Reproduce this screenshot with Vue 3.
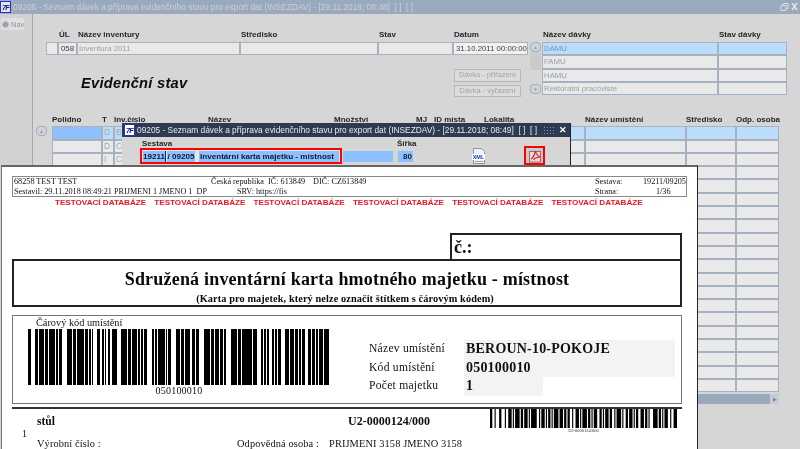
<script setup>
const topRows = ['DAMU', 'FAMU', 'HAMU', 'Rektoratni pracoviste']
const colWidths = [50, 12, 94, 126, 82, 18, 50, 101, 101, 50, 43]
const headers = ['Polidno', 'T', 'Inv.číslo', 'Název', 'Množství', 'MJ', 'ID místa', 'Lokalita', 'Název umístění', 'Středisko', 'Odp. osoba']
const gridCols = colWidths.map(w => w + 'px').join(' ')
const rows = Array.from({ length: 20 }, (_, i) => i)
const cellText = (r, c) => (c === 1 ? ['D', 'D', 'I'][r] || '' : c === 2 ? ['B', 'C', 'C'][r] || '' : '')
const testItems = Array.from({ length: 6 }, () => 'TESTOVACÍ DATABÁZE')

function toRects(start, seq) {
  const out = []
  let x = start
  seq.forEach((w, i) => {
    if (i % 2 === 0) out.push({ x, w })
    x += w
  })
  return out
}
const bigBars = [
  [28, [3]],
  [35, [3, 1, 5, 1, 3, 1, 6, 1, 2, 1, 3]],
  [67, [5, 1, 3, 1, 7, 1, 3, 1, 2, 1, 1]],
  [97, [3, 2, 2, 1, 1, 2, 2, 2, 5]],
  [121, [6, 1, 3, 1, 5, 1, 2, 1, 2, 1, 3]],
  [152, [2, 1, 2, 1, 7, 1, 1, 1, 3, 1]],
  [176, [4, 1, 3, 1, 5, 2, 3, 1, 3]],
  [204, [6, 1, 3, 1, 4, 1, 3, 1, 2]],
  [231, [6, 1, 3, 1, 10, 1, 4]],
  [261, [2, 1, 2, 1, 2, 3, 2, 1, 2, 1, 3]],
  [285, [4, 1, 4, 1, 3, 1, 2, 1, 3]],
  [308, [3, 1, 3, 1, 2, 1, 4, 1, 5]]
].flatMap(([s, seq]) => toRects(s, seq))

const smallSeq = [2, 2, 1, 3, 2, 3, 1, 2, 3, 1, 1, 1, 4, 1, 2, 1, 3, 1, 1, 1, 5, 2, 1, 1, 3, 1, 1, 1, 2, 1, 1, 1, 4, 1, 3, 1, 2, 1, 2, 2, 1, 2, 3, 1, 1, 1, 4, 1, 2, 1, 1, 1, 3, 2, 2, 1, 1, 1, 3, 1, 2, 2, 1, 1, 4, 1, 1, 2, 2, 1, 3, 1, 1, 1, 2, 2, 3, 1, 2, 1, 1, 3, 4, 1, 2, 1, 1, 1, 3, 2, 1, 2, 3]
const smallTotal = smallSeq.reduce((a, b) => a + b, 0)
const smallBars = toRects(0, smallSeq)
</script>

<template>
  <div class="screen">
    <!-- background window -->
    <div class="win">
      <header class="titlebar">
        <span class="logo logo-dim"><i>7F</i></span>
        <span class="title-text">09205 - Seznam dávek a příprava evidenčního stavu pro export dat (INSEZDAV) - [29.11.2018; 08:48]&nbsp;&nbsp;[ ]&nbsp;&nbsp;[ ]</span>
        <span class="win-ctrl">
          <svg width="18" height="10" viewBox="0 0 18 10"><path d="M1 3.5h5v5H1zM3 3.5V1.5h5v5H6" fill="none" stroke="#d8dde4" stroke-width="1"/><path d="M12 1l5 7M17 1l-5 7" stroke="#e4e8ee" stroke-width="1.4"/></svg>
        </span>
      </header>
      <div class="win-body">
        <aside class="side">
          <div class="nav"><span class="nav-dot"></span>Nav</div>
        </aside>
        <main class="content">
          <section class="top">
            <div class="inv">
              <div class="inv-grid">
                <span></span><b>ÚL</b><b>Název inventury</b><b>Středisko</b><b>Stav</b><b>Datum</b>
                <span class="f"></span>
                <span class="f dark">058</span>
                <span class="f">Inventura 2011</span>
                <span class="f"></span>
                <span class="f"></span>
                <span class="f dark white">31.10.2011 00:00:00</span>
              </div>
              <div class="inv-lower">
                <h1>Evidenční stav</h1>
                <div class="btns">
                  <span class="btn">Dávka - přiřazení</span>
                  <span class="btn">Dávka - vyřazení</span>
                </div>
              </div>
            </div>
            <div class="vscroll">
              <span class="arrow">▲</span>
              <span class="track"></span>
              <span class="arrow">▼</span>
            </div>
            <div class="batch">
              <b>Název dávky</b><b>Stav dávky</b>
              <template v-for="(n, i) in topRows" :key="n">
                <span class="f" :class="{ sel: i === 0 }">{{ n }}</span>
                <span class="f" :class="{ sel: i === 0 }"></span>
              </template>
            </div>
          </section>

          <section class="table">
            <div class="tscroll"><span class="arrow">▲</span></div>
            <div class="tmain">
              <div class="tgrid" :style="{ gridTemplateColumns: gridCols }">
                <b v-for="h in headers" :key="h" class="th">{{ h }}</b>
              </div>
              <div v-for="r in rows" :key="r" class="tgrid" :style="{ gridTemplateColumns: gridCols }">
                <span
                  v-for="(w, c) in colWidths"
                  :key="c"
                  class="f cell"
                  :class="{ sel: r === 0, strong: r === 0 && c === 0 }"
                >{{ cellText(r, c) }}</span>
              </div>
              <div class="hscroll"><span class="harrow">▶</span></div>
            </div>
          </section>
        </main>
      </div>
    </div>

    <!-- modal window -->
    <div class="modal">
      <header class="m-title">
        <span class="logo"><i>7F</i></span>
        <span class="m-text">09205 - Seznam dávek a příprava evidenčního stavu pro export dat (INSEZDAV) - [29.11.2018; 08:49]&nbsp;&nbsp;[ ]&nbsp;&nbsp;[ ]</span>
        <span class="m-dots"></span>
        <span class="m-x">✕</span>
      </header>
      <div class="m-labels"><b>Sestava</b><b>Šířka</b></div>
      <div class="m-row">
        <div class="redbox">
          <span class="m-f n1">19211</span>
          <span class="m-f n2">/ 09205</span>
          <span class="m-f n3">Inventární karta majetku - místnost</span>
        </div>
        <span class="m-f n4"></span>
        <span class="m-f n5">80</span>
        <span class="icon-xml">
          <svg width="16" height="16" viewBox="0 0 16 16">
            <path d="M2.5 .5h8l3 3v12h-11z" fill="#eef1f6" stroke="#8a93a3"/>
            <rect x="1" y="6" width="13" height="6" fill="#fff"/>
            <text x="7.500" y="11.300" text-anchor="middle" class="xml-t">XML</text>
            <path d="M4 13.500h8" stroke="#9aa3b2"/>
          </svg>
        </span>
        <span class="icon-pdf">
          <svg width="14" height="14" viewBox="0 0 14 14">
            <rect x="1.500" y="2.500" width="11" height="10.500" fill="#e9d9d6" stroke="#9a6a6a"/>
            <path d="M3 10c2-1 3.500-4 4.500-8 .5 3 2 5 5 6-3 0-5.500 .5-7 3" fill="none" stroke="#d8232a" stroke-width="1.200"/>
          </svg>
        </span>
      </div>
    </div>

    <!-- report document -->
    <div class="paper">
      <div class="rhead">
        <div class="rline">
          <span class="w197">68258 TEST TEST</span>
          <span class="w102">Česká republika&nbsp; IČ: 613849</span>
          <span class="w282">DIČ: CZ613849</span>
          <span class="w48">Sestava:</span>
          <span>19211/09205</span>
        </div>
        <div class="rline">
          <span class="w223">Sestavil: 29.11.2018 08:49:21 PRIJMENI 1 JMENO 1&nbsp; DP</span>
          <span class="w358">SRV: https://fis</span>
          <span class="w61">Strana:</span>
          <span>1/36</span>
        </div>
      </div>
      <div class="tests">
        <span v-for="(t, i) in testItems" :key="i">{{ t }}</span>
      </div>
      <div class="cbox">č.:</div>
      <div class="tbox">
        <div class="t1">Sdružená inventární karta hmotného majetku - místnost</div>
        <div class="t2">(Karta pro majetek, který nelze označit štítkem s čárovým kódem)</div>
      </div>
      <div class="bbox">
        <div class="bleft">
          <div class="blabel">Čárový kód umístění</div>
          <svg class="bars" width="302" height="56" viewBox="28 0 302 56">
            <rect v-for="(b, i) in bigBars" :key="i" :x="b.x" y="0" :width="b.w" height="56" fill="#000"/>
          </svg>
          <div class="bnum">050100010</div>
        </div>
        <div class="bright">
          <span class="k">Název umístění</span><span class="v">BEROUN-10-POKOJE</span>
          <span class="k">Kód umístění</span><span class="v">050100010</span>
          <span class="k">Počet majetku</span><span class="v short">1</span>
        </div>
      </div>
      <div class="item">
        <span class="idx">1</span>
        <b class="i-name">stůl</b>
        <b class="i-code">U2-0000124/000</b>
        <div class="i-bar">
          <svg width="187" height="19" :viewBox="`0 0 ${smallTotal} 19`" preserveAspectRatio="none">
            <rect v-for="(b, i) in smallBars" :key="i" :x="b.x" y="0" :width="b.w" height="19" fill="#000"/>
          </svg>
          <span>U2-0000124/000</span>
        </div>
        <div class="i-row">
          <span class="w200">Výrobní číslo :</span>
          <span class="w92">Odpovědná osoba :</span>
          <span>PRIJMENI 3158 JMENO 3158</span>
        </div>
      </div>
    </div>
  </div>
</template>

<style>
html, body { margin: 0; background: #d6d6d6; overflow: hidden; }
</style>

<style scoped>
.screen {
  position: relative;
  width: 800px;
  height: 449px;
  overflow: hidden;
  font-family: "Liberation Sans", Arial, sans-serif;
  font-size: 8px;
  color: #333;
  background: #d6d6d6;
  filter: blur(0.4px);
}
.win { display: flex; flex-direction: column; height: 449px; }
.titlebar {
  display: flex;
  align-items: center;
  height: 14px;
  background: #9aa9bc;
  color: #c9d1dc;
  font-size: 8.350px;
  white-space: nowrap;
  flex: none;
}
.logo {
  display: inline-flex;
  align-items: center;
  justify-content: center;
  box-sizing: border-box;
  width: 11px;
  height: 12px;
  margin-right: 2px;
  background: #fff;
  border: 1px solid #2a33c4;
  color: #10207a;
  font: italic bold 7.500px "Liberation Sans", sans-serif;
  letter-spacing: -1px;
  overflow: hidden;
  flex: none;
}
.logo-dim { background: #dfe3f2; }
.title-text { flex: 1; }
.win-ctrl { display: flex; width: 20px; flex: none; }

.win-body { display: flex; flex: 1; min-height: 0; }
.side {
  width: 32px;
  flex: none;
  background: #d2d2d2;
  border-right: 1px solid #a8a8a8;
  padding-top: 4px;
  box-sizing: content-box;
}
.nav {
  display: flex;
  align-items: center;
  gap: 2px;
  width: 23px;
  height: 12px;
  margin-left: 1px;
  background: #e0e0e0;
  color: #8d939c;
  font-size: 7.500px;
}
.nav-dot { width: 5px; height: 5px; margin-left: 1px; border-radius: 50%; background: #9aa3ad; border: 1px solid #b5bbc2; flex: none; }
.content { flex: 1; min-width: 0; }

.top { display: flex; padding: 14px 0 0 13px; height: 85px; box-sizing: border-box; }
.inv { width: 482px; flex: none; }
.inv-grid {
  display: grid;
  grid-template-columns: 12px 19px 163px 138px 75px 75px;
  grid-template-rows: 14px 13px;
}
.inv-grid b, .batch b { font-size: 8px; color: #262626; padding-left: 1px; line-height: 13px; white-space: nowrap; }
.f {
  box-sizing: border-box;
  display: block;
  height: 100%;
  background: #e9e9e9;
  border: 1px solid #a6b1c1;
  color: #9a9fa6;
  font-size: 7.800px;
  line-height: 11px;
  padding-left: 1px;
  white-space: nowrap;
  overflow: hidden;
}
.dark { color: #404040; padding-left: 2px; font-size: 7.800px; }
.white { background: #f1f1f1; }
.sel { background: #bcdcfb; color: #6f94bd; }
.strong { background: #8fc0fb; }
.inv-lower { display: flex; justify-content: space-between; padding-left: 35px; padding-right: 7px; margin-top: 14px; }
h1 { margin: 5px 0 0; font: italic bold 14.700px "Liberation Sans", sans-serif; color: #0c0c0c; letter-spacing: 0.25px; line-height: 18px; }
.btns { display: flex; flex-direction: column; gap: 3px; }
.btn {
  box-sizing: border-box;
  width: 67px;
  height: 12.500px;
  background: #dcdcdc;
  border: 1px solid #b4b9c0;
  color: #a0a4aa;
  font-size: 7.500px;
  line-height: 10.500px;
  text-align: center;
  white-space: nowrap;
}
.vscroll { display: flex; flex-direction: column; width: 11px; margin: 14px 0 0 2px; height: 53px; flex: none; }
.arrow {
  display: block;
  width: 11px;
  height: 10px;
  background: #d0d3d8;
  border: 1px solid #a5adb9;
  border-radius: 4px;
  box-sizing: border-box;
  color: #98a0ac;
  font-size: 5px;
  line-height: 8px;
  text-align: center;
  flex: none;
}
.track { height: 18px; background: #cbcbcb; flex: none; }
.vscroll .arrow:last-child { margin-top: 14px; }
.batch {
  display: grid;
  grid-template-columns: 176px 69px;
  grid-template-rows: 14px repeat(4, 13.300px);
  margin-left: 1px;
}

.table { display: flex; padding: 14px 0 0 3px; }
.tscroll { width: 13px; padding-top: 13px; flex: none; }
.tmain { margin-left: 3px; width: 727px; flex: none; }
.tgrid { display: grid; height: 13.300px; }
.th { font-size: 8px; color: #262626; white-space: nowrap; line-height: 13px; }
.cell { color: #a3a9b2; font-size: 8.500px; }
.hscroll {
  margin-top: 2px;
  height: 10px;
  background: #9aa9bc;
  display: flex;
  justify-content: flex-end;
}
.harrow {
  width: 9px;
  background: #c5ccd6;
  color: #76838f;
  font-size: 5px;
  line-height: 10px;
  text-align: center;
}

.modal {
  position: absolute;
  left: 122px;
  top: 123px;
  width: 449px;
  height: 42px;
  box-sizing: border-box;
  background: #d6d6d6;
  border-right: 1px solid #222;
}
.m-title {
  display: flex;
  align-items: center;
  height: 14px;
  background: #2c3b52;
  color: #e8ebf0;
  font-size: 8.350px;
  white-space: nowrap;
  padding-left: 2px;
}
.m-title .logo { margin-right: 2px; }
.m-text { flex: none; width: 404px; overflow: hidden; }
.m-dots {
  width: 13px;
  height: 9px;
  margin-left: 2px;
  flex: none;
  background-image: radial-gradient(circle, #8a98ac 0.8px, transparent 1px);
  background-size: 3px 3px;
}
.m-x { color: #fff; font-size: 9px; font-weight: bold; margin-left: 3px; line-height: 10px; }
.m-labels { display: flex; padding-left: 20px; height: 11px; line-height: 13px; }
.m-labels b { font-size: 8px; color: #262626; }
.m-labels b:first-child { width: 255px; }
.m-row { display: flex; align-items: flex-start; padding-left: 18px; position: relative; }
.redbox {
  box-sizing: border-box;
  width: 202px;
  height: 16px;
  border: 2px solid #f00;
  display: flex;
  align-items: center;
  flex: none;
  background: #e5e5e5;
  padding-left: 1px;
}
.m-f {
  display: block;
  height: 11px;
  line-height: 11px;
  background: #8cc0ff;
  color: #0b1a33;
  font-weight: bold;
  font-size: 8.100px;
  white-space: nowrap;
  flex: none;
}
.n1 { width: 23px; text-align: center; border-right: 1px solid #223; box-sizing: border-box; }
.n2 { width: 28px; margin-left: 1px; text-align: center; }
.n3 { width: 140px; margin-left: 4px; padding-left: 1px; box-sizing: border-box; }
.n4 { width: 50px; margin: 3px 0 0 1px; }
.n5 { width: 15px; margin: 3px 0 0 5px; text-align: right; padding-right: 1px; box-sizing: border-box; }
.icon-xml { width: 16px; height: 16px; margin-left: 58px; flex: none; }
.xml-t { font: bold 5.500px "Liberation Sans", sans-serif; fill: #1838c8; }
.icon-pdf {
  position: absolute;
  left: 402px;
  top: -2px;
  box-sizing: border-box;
  width: 21px;
  height: 19px;
  border: 2px solid #f00;
  background: #c9c9c9;
  display: flex;
  align-items: center;
  justify-content: center;
}

.paper {
  position: absolute;
  left: 1px;
  top: 165px;
  box-sizing: border-box;
  width: 697px;
  height: 284px;
  background: #fff;
  border-top: 2px solid #666;
  border-left: 1px solid #777;
  border-right: 1px solid #222;
  padding: 9px 0 0 10px;
  font-family: "Liberation Serif", "Times New Roman", serif;
  color: #111;
  font-size: 8.200px;
}
.rhead {
  box-sizing: border-box;
  width: 675px;
  height: 21px;
  border: 1px solid #888;
  padding-left: 1px;
}
.rline { display: flex; height: 10px; line-height: 10px; white-space: nowrap; }
.rline span { flex: none; }
.w197 { width: 197px; } .w102 { width: 102px; } .w282 { width: 282px; } .w48 { width: 48px; }
.w223 { width: 223px; } .w358 { width: 358px; } .w61 { width: 61px; text-align: left; }
.tests {
  display: flex;
  gap: 8.300px;
  height: 10px;
  padding-left: 43px;
  font: bold 8.100px/11px "Liberation Sans", sans-serif;
  color: #f01226;
  white-space: nowrap;
}
.tests span { width: 91px; flex: none; }
.cbox {
  box-sizing: border-box;
  width: 232px;
  height: 26px;
  margin: 26px 0 0 438px;
  border: 2px solid #222;
  border-bottom: 0;
  font: bold 18px/25px "Liberation Serif", serif;
  padding-left: 2px;
}
.tbox {
  box-sizing: border-box;
  width: 670px;
  height: 48px;
  border: 2px solid #222;
  padding-right: 4px;
  text-align: center;
  color: #0a0a0a;
}
.t1 { font: bold 18px/25px "Liberation Serif", serif; margin: 6px -4px 0 0; letter-spacing: 0.2px; }
.t2 { font: bold 10.300px/13px "Liberation Serif", serif; letter-spacing: 0.1px; }
.bbox {
  box-sizing: border-box;
  width: 670px;
  height: 89px;
  margin-top: 8px;
  border: 1px solid #777;
  display: flex;
}
.bleft { width: 340px; flex: none; padding-left: 15px; box-sizing: border-box; }
.blabel { font-size: 10.300px; line-height: 12px; margin: 1px 0 0 8px; }
.bars { display: block; }
.bnum { font-size: 10px; line-height: 11px; text-align: center; width: 302px; letter-spacing: 0.2px; }
.bright {
  display: grid;
  grid-template-columns: 95px 211px;
  grid-auto-rows: 18.500px;
  margin: 24px 0 0 16px;
}
.k { font-size: 11.600px; line-height: 18px; letter-spacing: 0.25px; white-space: nowrap; }
.v { background: #f3f3f3; font: bold 14px/18px "Liberation Serif", serif; letter-spacing: 0.2px; padding-left: 2px; }
.v.short { width: 79px; box-sizing: border-box; }
.item {
  box-sizing: border-box;
  width: 670px;
  height: 48px;
  margin-top: 3px;
  border-top: 2px solid #333;
  display: grid;
  grid-template-columns: 25px 311px 142px 187px;
  grid-template-rows: 27px 18px;
  position: relative;
}
.idx { grid-column: 1; grid-row: 1 / span 2; padding: 19px 0 0 10px; font-size: 10px; line-height: 11px; }
.i-name { grid-column: 2; grid-row: 1; font-size: 11.500px; line-height: 25px; }
.i-code { grid-column: 3; grid-row: 1; font-size: 12px; line-height: 25px; white-space: nowrap; }
.i-bar { grid-column: 4; grid-row: 1; display: flex; flex-direction: column; align-items: center; }
.i-bar svg { display: block; flex: none; }
.i-bar span { font-size: 4.500px; line-height: 5px; color: #333; }
.i-row { grid-column: 2 / span 3; grid-row: 2; display: flex; font-size: 10.400px; line-height: 15px; letter-spacing: 0.1px; white-space: nowrap; }
.w200 { width: 200px; flex: none; } .w92 { width: 92px; flex: none; }
</style>
